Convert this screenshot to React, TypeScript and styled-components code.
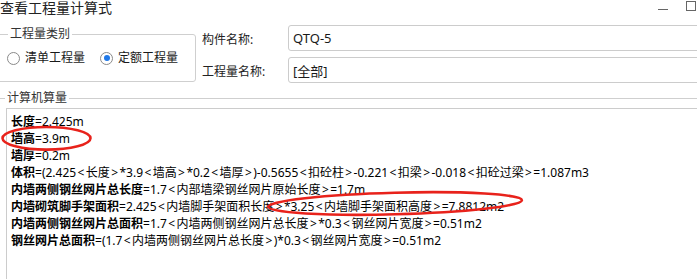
import React from "react";
import styled, { createGlobalStyle } from "styled-components";

const GlobalStyle = createGlobalStyle`
  html, body { margin: 0; padding: 0; background: #fff; }
  body {
    overflow: hidden;
    font-family: "Noto Sans", "Noto Sans CJK SC", sans-serif;
    color: #1a1a1a;
  }
  * { box-sizing: border-box; }
`;

const Window = styled.div`
  position: relative;
  width: 697px;
  height: 279px;
  overflow: hidden;
  background: #fff;
  display: flex;
  flex-direction: column;
`;

const TitleBar = styled.div`
  height: 25px;
  display: flex;
  justify-content: space-between;
  align-items: flex-start;
`;

const Title = styled.div`
  margin-left: 0;
  margin-top: 0;
  font-size: 14px;
  line-height: 15px;
  color: #222;
`;

const WinControls = styled.div`
  display: flex;
  align-items: flex-start;
  gap: 18px;
  margin-right: 1px;
`;

const MinBtn = styled.div`
  width: 10px;
  height: 1px;
  margin-top: 9px;
  background: #666;
`;

const MaxBtn = styled.div`
  width: 10px;
  height: 10px;
  margin-top: 1px;
  border: 1px solid #666;
`;

const TopSection = styled.div`
  display: flex;
  align-items: flex-start;
  height: 57px;
`;

const GroupBox = styled.fieldset`
  margin: 2px 0 0 -3px;
  width: 199px;
  height: 55px;
  padding: 10px 0 0 9px;
  border: 1px solid #cfcfcf;
  border-radius: 3px;
  min-inline-size: 0;
`;

const Legend = styled.legend`
  margin-left: 1px;
  padding: 0 2px;
  font-size: 12px;
  line-height: 14px;
  color: #333;
`;

const RadioRow = styled.div`
  display: flex;
  align-items: center;
  gap: 15px;
  height: 14px;
`;

const RadioItem = styled.label`
  display: flex;
  align-items: center;
  gap: 5px;
  font-size: 12px;
  line-height: 14px;
  color: #1a1a1a;
`;

const RadioCircle = styled.span<{ $checked?: boolean }>`
  width: 13px;
  height: 13px;
  border-radius: 50%;
  border: 1px solid #8a8a8a;
  background: #fff;
  display: flex;
  align-items: center;
  justify-content: center;
  &::after {
    content: "";
    width: 6px;
    height: 6px;
    border-radius: 50%;
    background: ${(p) => (p.$checked ? "#1f78e8" : "transparent")};
  }
`;

const FormGrid = styled.div`
  flex: 1;
  margin-left: 6px;
  margin-right: -10px;
  display: grid;
  grid-template-columns: 86px 1fr;
  grid-auto-rows: 26px;
  row-gap: 6px;
`;

const FieldLabel = styled.div`
  padding-top: 2px;
  display: flex;
  align-items: center;
  font-size: 12px;
  color: #222;
`;

const FieldInput = styled.div`
  border: 1px solid #cccccc;
  border-radius: 3px;
  padding-left: 4px;
  display: flex;
  align-items: center;
  font-size: 13px;
  color: #1a1a1a;
`;

const CalcSection = styled.div`
  margin-top: 9px;
  margin-right: -10px;
  flex: 1;
  display: flex;
  flex-direction: column;
`;

const SectionHeader = styled.div`
  height: 14px;
  display: flex;
  align-items: center;
`;

const HeaderRule = styled.div<{ $w?: number }>`
  height: 1px;
  background: #cfcfcf;
  ${(p) => (p.$w ? `width: ${p.$w}px;` : "flex: 1;")}
`;

const SectionLegend = styled.span`
  padding: 0 2px 0 2px;
  font-size: 12px;
  line-height: 14px;
  color: #333;
`;

const TextArea = styled.div`
  margin: 3px 0 -20px 6px;
  flex: 1;
  border: 1px solid #cccccc;
  background: #fff;
  padding: 4px 0 0 4px;
`;

const Line = styled.div`
  font-size: 12px;
  line-height: 17px;
  height: 17px;
  white-space: nowrap;
  color: #000;
`;

const Key = styled.b`
  font-weight: 700;
`;

const Bracket = styled.span`
  padding: 0 1.4px;
`;

const Annotation = styled.svg`
  position: absolute;
  left: 0;
  top: 0;
  pointer-events: none;
`;

const lines: [string, string][] = [
  ["长度", "=2.425m"],
  ["墙高", "=3.9m"],
  ["墙厚", "=0.2m"],
  ["体积", "=(2.425<长度>*3.9<墙高>*0.2<墙厚>)-0.5655<扣砼柱>-0.221<扣梁>-0.018<扣砼过梁>=1.087m3"],
  ["内墙两侧钢丝网片总长度", "=1.7<内部墙梁钢丝网片原始长度>=1.7m"],
  ["内墙砌筑脚手架面积", "=2.425<内墙脚手架面积长度>*3.25<内墙脚手架面积高度>=7.8812m2"],
  ["内墙两侧钢丝网片总面积", "=1.7<内墙两侧钢丝网片总长度>*0.3<钢丝网片宽度>=0.51m2"],
  ["钢丝网片总面积", "=(1.7<内墙两侧钢丝网片总长度>)*0.3<钢丝网片宽度>=0.51m2"],
];

function Formula({ text }: { text: string }) {
  const parts = text.split(/([<>])/);
  return (
    <>
      {parts.map((p, i) =>
        p === "<" || p === ">" ? <Bracket key={i}>{p}</Bracket> : <React.Fragment key={i}>{p}</React.Fragment>
      )}
    </>
  );
}

export default function App() {
  return (
    <>
      <GlobalStyle />
      <Window>
        <TitleBar>
          <Title>查看工程量计算式</Title>
          <WinControls>
            <MinBtn />
            <MaxBtn />
          </WinControls>
        </TitleBar>
        <TopSection>
          <GroupBox>
            <Legend>工程量类别</Legend>
            <RadioRow>
              <RadioItem>
                <RadioCircle />
                清单工程量
              </RadioItem>
              <RadioItem>
                <RadioCircle $checked />
                定额工程量
              </RadioItem>
            </RadioRow>
          </GroupBox>
          <FormGrid>
            <FieldLabel>构件名称:</FieldLabel>
            <FieldInput>QTQ-5</FieldInput>
            <FieldLabel>工程量名称:</FieldLabel>
            <FieldInput>[全部]</FieldInput>
          </FormGrid>
        </TopSection>
        <CalcSection>
          <SectionHeader>
            <HeaderRule $w={5} />
            <SectionLegend>计算机算量</SectionLegend>
            <HeaderRule />
          </SectionHeader>
          <TextArea>
            {lines.map(([k, v]) => (
              <Line key={k}>
                <Key>{k}</Key>
                <Formula text={v} />
              </Line>
            ))}
          </TextArea>
        </CalcSection>
        <Annotation width={697} height={279} viewBox="0 0 697 279">
          <ellipse cx={46.5} cy={138.3} rx={44} ry={11.3} fill="none" stroke="#e8221b" strokeWidth={2.6} />
          <ellipse
            cx={395}
            cy={203.5}
            rx={127}
            ry={10.8}
            fill="none"
            stroke="#e8221b"
            strokeWidth={2.6}
            transform="rotate(-1.5 395 203.5)"
          />
        </Annotation>
      </Window>
    </>
  );
}
